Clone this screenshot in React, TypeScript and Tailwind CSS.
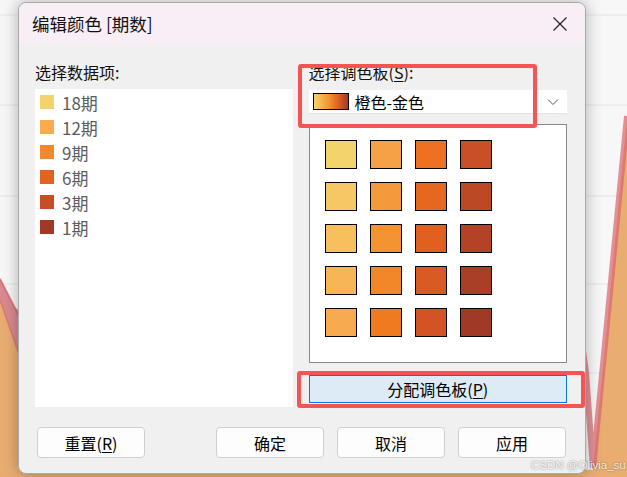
import React from 'react'

const font = { fontFamily: '"Noto Sans CJK SC", "Noto Sans", sans-serif' }

const items = [
  { label: '18期', color: '#f3d36c' },
  { label: '12期', color: '#f8ac4e' },
  { label: '9期', color: '#f4882f' },
  { label: '6期', color: '#e2631f' },
  { label: '3期', color: '#c84c25' },
  { label: '1期', color: '#a03a27' },
]

// column by column, top to bottom
const palette = [
  ['#f3d36b', '#f6c865', '#f8bf5e', '#f8b556', '#f7aa4e'],
  ['#f7a146', '#f59a3c', '#f39332', '#f2872a', '#f07a20'],
  ['#ee7020', '#e6681f', '#e0611f', '#d95a22', '#d35325'],
  ['#c94f26', '#bd4826', '#b34326', '#a83f26', '#a03a27'],
]

function Chart() {
  return (
    <svg className="absolute inset-0" width="627" height="477" viewBox="0 0 627 477">
      <rect width="627" height="477" fill="#f7f7f7" />
      {[15, 105, 196, 284, 373, 462].map((y) => (
        <line key={y} x1="0" x2="627" y1={y} y2={y} stroke="#e4e4e4" strokeWidth="1" />
      ))}
      <polygon points="0,300 300,455 593,470 627,118 627,477 0,477" fill="#e9ad72" />
      <polygon points="0,278 20,318 20,357 0,300" fill="#d98a90" />
      <polyline points="0,279 20,318" fill="none" stroke="#d9646c" strokeWidth="2" opacity="0.7" />
      <polyline points="0,300 20,357" fill="none" stroke="#d9646c" strokeWidth="1.5" opacity="0.6" />
      <polyline
        points="580,330 586,372 593,468 627,116"
        fill="none"
        stroke="#d9646c"
        strokeWidth="6"
        strokeLinejoin="miter"
        opacity="0.7"
      />
    </svg>
  )
}

function Accel({ text, k }: { text: string; k: string }) {
  return (
    <>
      {text}(<span className="underline underline-offset-2 decoration-1">{k}</span>)
    </>
  )
}

function Button({ children }: { children: React.ReactNode }) {
  return (
    <button className="w-[108px] h-[31px] rounded-[4px] border border-[#cfcfcf] bg-[#fdfdfd] text-[16px] leading-none text-black">
      {children}
    </button>
  )
}

export default function App() {
  return (
    <div className="relative w-[627px] h-[477px] overflow-hidden" style={font}>
      <Chart />

      <div className="absolute left-[18px] top-[2px] w-[568px] h-[472px] flex flex-col rounded-[8px] border border-[#a9a9a9] bg-[#f0f0f0] overflow-hidden shadow-[0_0_16px_rgba(0,0,0,0.3)]">
        <div className="h-[42px] shrink-0 flex items-center justify-between bg-[#f7eef6] pr-[17px]">
          <span className="ml-[13px] text-[17.5px] leading-none text-[#111]">编辑颜色 [期数]</span>
          <svg width="16" height="16" viewBox="0 0 16 16">
            <path d="M1.5 1.5 L14.5 14.5 M14.5 1.5 L1.5 14.5" stroke="#222" strokeWidth="1.2" fill="none" />
          </svg>
        </div>

        <div className="flex gap-[16px] pl-[16px] pr-[18px] pt-[17px]">
          <div className="w-[258px] flex flex-col">
            <div className="h-[20px] text-[16px] leading-[20px] text-[#111]">选择数据项:</div>
            <div className="mt-[7px] h-[318px] bg-white pt-[6px] pl-[5px]">
              {items.map((it) => (
                <div key={it.label} className="h-[25px] flex items-start gap-[8px]">
                  <div className="w-[14px] h-[14px] shrink-0" style={{ backgroundColor: it.color }} />
                  <span className="text-[17px] leading-[15px] text-[#5c5c5c]">{it.label}</span>
                </div>
              ))}
            </div>
          </div>

          <div className="w-[259px] flex flex-col">
            <div className="h-[20px] text-[16px] leading-[20px] text-[#111]">
              <Accel text="选择调色板" k="S" />:
            </div>
            <div className="mt-[8px] h-[24px] flex items-center bg-white pl-[4px] pr-[8px] border-b border-[#e2e2e2]">
              <div className="w-[36px] h-[17px] border border-black bg-[linear-gradient(to_right,#f8d26c,#f39332_45%,#d95a22_75%,#a03a27)]" />
              <span className="ml-[6px] text-[16px] leading-none text-black">橙色-金色</span>
              <svg className="ml-auto" width="12" height="8" viewBox="0 0 12 8">
                <path d="M1 1.5 L6 6.5 L11 1.5" stroke="#555" strokeWidth="1" fill="none" />
              </svg>
            </div>
            <div className="mt-[10px] h-[239px] bg-white border border-[#8a8a8a] pt-[15px] pl-[15px]">
              <div className="grid grid-cols-[repeat(4,32px)] grid-rows-[repeat(5,29px)] grid-flow-col gap-[13px]">
                {palette.flat().map((c, i) => (
                  <div key={i} className="border border-black" style={{ backgroundColor: c }} />
                ))}
              </div>
            </div>
            <button className="mt-[12px] h-[28px] bg-[#ddebf7] border border-[#0a78d4] text-[16px] leading-none text-black">
              <Accel text="分配调色板" k="P" />
            </button>
          </div>
        </div>

        <div className="mt-[20px] flex justify-between pl-[18px] pr-[19px]">
          <Button>
            <Accel text="重置" k="R" />
          </Button>
          <div className="flex gap-[13px]">
            <Button>确定</Button>
            <Button>取消</Button>
            <Button>应用</Button>
          </div>
        </div>
      </div>

      <div className="absolute left-[298px] top-[64px] w-[239px] h-[64px] rounded-[3px] border-[4px] border-[#f55454]" />
      <div className="absolute left-[297px] top-[371px] w-[288px] h-[37px] rounded-[3px] border-[4px] border-[#f55454]" />

      <div
        className="absolute left-[531px] top-[460px] whitespace-nowrap text-[11.5px] leading-none text-white/85"
        style={{ fontFamily: '"Liberation Sans", Arial, sans-serif', textShadow: '0 0 2px rgba(0,0,0,0.5)' }}
      >
        CSDN @Olivia_su
      </div>
    </div>
  )
}
